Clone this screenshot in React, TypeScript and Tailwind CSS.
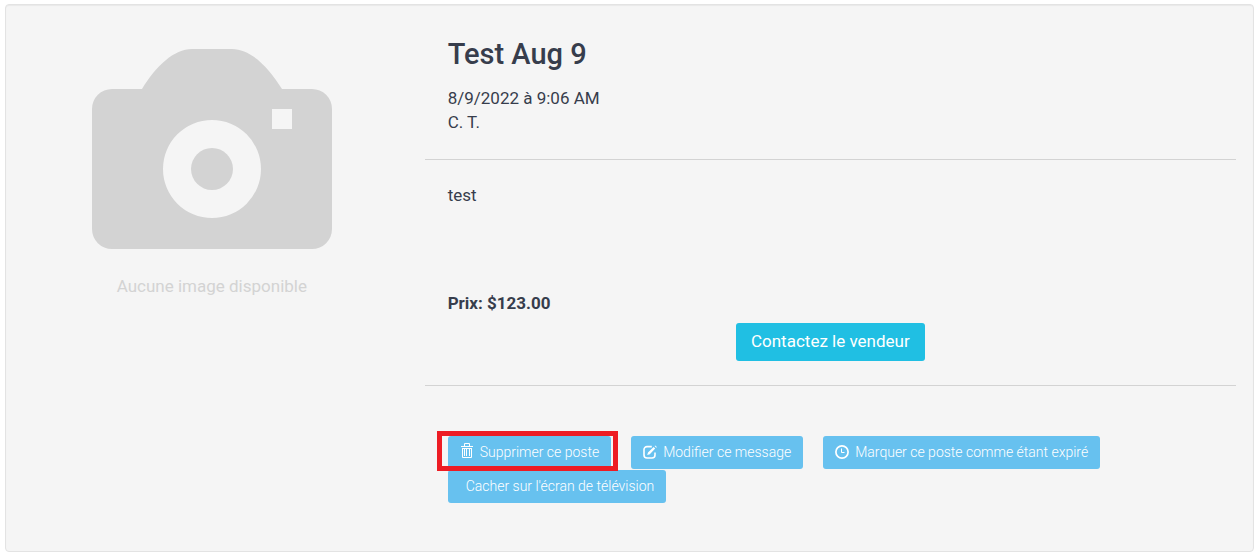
import type { ReactNode } from "react";

function CameraPlaceholder() {
  return (
    <svg viewBox="0 0 240 200" className="w-60 h-50" fill="#d3d3d3" aria-hidden="true">
      <path
        fillRule="evenodd"
        d="M20 40H50C64 17 82 0 100 0H140C158 0 176 17 190 40H220A20 20 0 0 1 240 60V180A20 20 0 0 1 220 200H20A20 20 0 0 1 0 180V60A20 20 0 0 1 20 40ZM180 60V80H200V60ZM120 71A49 49 0 1 0 120 169A49 49 0 1 0 120 71Z"
      />
      <circle cx="120" cy="120" r="21" />
    </svg>
  );
}

function TrashIcon() {
  return (
    <svg viewBox="0 0 14 19" width="14" height="19" fill="none" stroke="currentColor" aria-hidden="true">
      <path d="M1 3.5H13M4.5 3V.5H9.5V3M2.5 5V14.5H11.5V5M2 5.5H12M4.5 6V13M6.5 6V13M9.5 6V13" />
    </svg>
  );
}

function EditIcon() {
  return (
    <svg viewBox="0 0 14 15" width="14" height="15" fill="none" stroke="currentColor" aria-hidden="true">
      <path strokeWidth="1.6" d="M8.8 1.6H4A3 3 0 0 0 1 4.6V10A3 3 0 0 0 4 13H9A3 3 0 0 0 12 10V7.5" />
      <path fill="currentColor" stroke="none" d="M10.6 2 12.2 3.6 6.8 9.2 4.2 10 5 7.6ZM11.6 1 12.2.4 13.9 2 13.2 2.7Z" />
    </svg>
  );
}

function ClockIcon() {
  return (
    <svg viewBox="0 0 14 15" width="14" height="15" fill="none" stroke="currentColor" aria-hidden="true">
      <circle cx="7" cy="7" r="6.1" strokeWidth="1.7" />
      <path d="M6.5 3.5V7.5H9.5" />
    </svg>
  );
}

function ActionButton({ icon, children }: { icon?: ReactNode; children: ReactNode }) {
  return (
    <button
      type="button"
      className="inline-flex items-center gap-1.5 rounded-[3px] bg-[#67c1ef] px-3 py-1.5 text-sm leading-[21px] font-light text-white hover:bg-[#50b8ec]"
    >
      {icon}
      {children}
    </button>
  );
}

export default function App() {
  return (
    <div className="bg-white pt-1 pl-[5px] pb-2 font-['Roboto','Liberation_Sans',sans-serif] text-[17px] leading-6 text-[#373d4c]">
      <article className="grid grid-cols-[1fr_2fr] gap-x-[13px] rounded border border-[#e3e3e3] bg-[#f5f5f5] pr-[17px] pb-12 shadow-[inset_0_1px_1px_rgba(0,0,0,0.05)]">
        {/* Image */}
        <div className="flex flex-col items-center gap-[25px] pt-11 pl-1.5 text-[#d3d3d3]">
          <CameraPlaceholder />
          <p>Aucune image disponible</p>
        </div>

        {/* Details */}
        <div>
          <header className="px-[23px] pt-[33px] pb-[25px]">
            <h1 className="text-[29px] leading-8 font-medium">Test Aug 9</h1>
            <p className="mt-4">8/9/2022 à 9:06 AM</p>
            <p>C. T.</p>
          </header>

          <section className="border-y border-[#d3d3d3] pt-[23px] pb-6">
            <p className="min-h-27 px-[23px]">test</p>
            <p className="px-[23px] font-bold">Prix: $123.00</p>
            <div className="mt-2 flex justify-center">
              <button
                type="button"
                className="rounded-[3px] bg-[#20bfe3] px-[15px] pt-1.5 pb-2 text-white hover:bg-[#1babcc]"
              >
                Contactez le vendeur
              </button>
            </div>
          </section>

          <div className="mt-[50px] flex flex-wrap gap-x-5 gap-y-px px-[23px]">
            <div className="relative flex">
              <ActionButton icon={<TrashIcon />}>Supprimer ce poste</ActionButton>
              <span className="pointer-events-none absolute -top-[5px] -right-[7px] -bottom-0.5 -left-[11px] border-5 border-[#ed1c24]" />
            </div>
            <ActionButton icon={<EditIcon />}>Modifier ce message</ActionButton>
            <ActionButton icon={<ClockIcon />}>Marquer ce poste comme étant expiré</ActionButton>
            <ActionButton icon={<span />}>Cacher sur l'écran de télévision</ActionButton>
          </div>
        </div>
      </article>
    </div>
  );
}
